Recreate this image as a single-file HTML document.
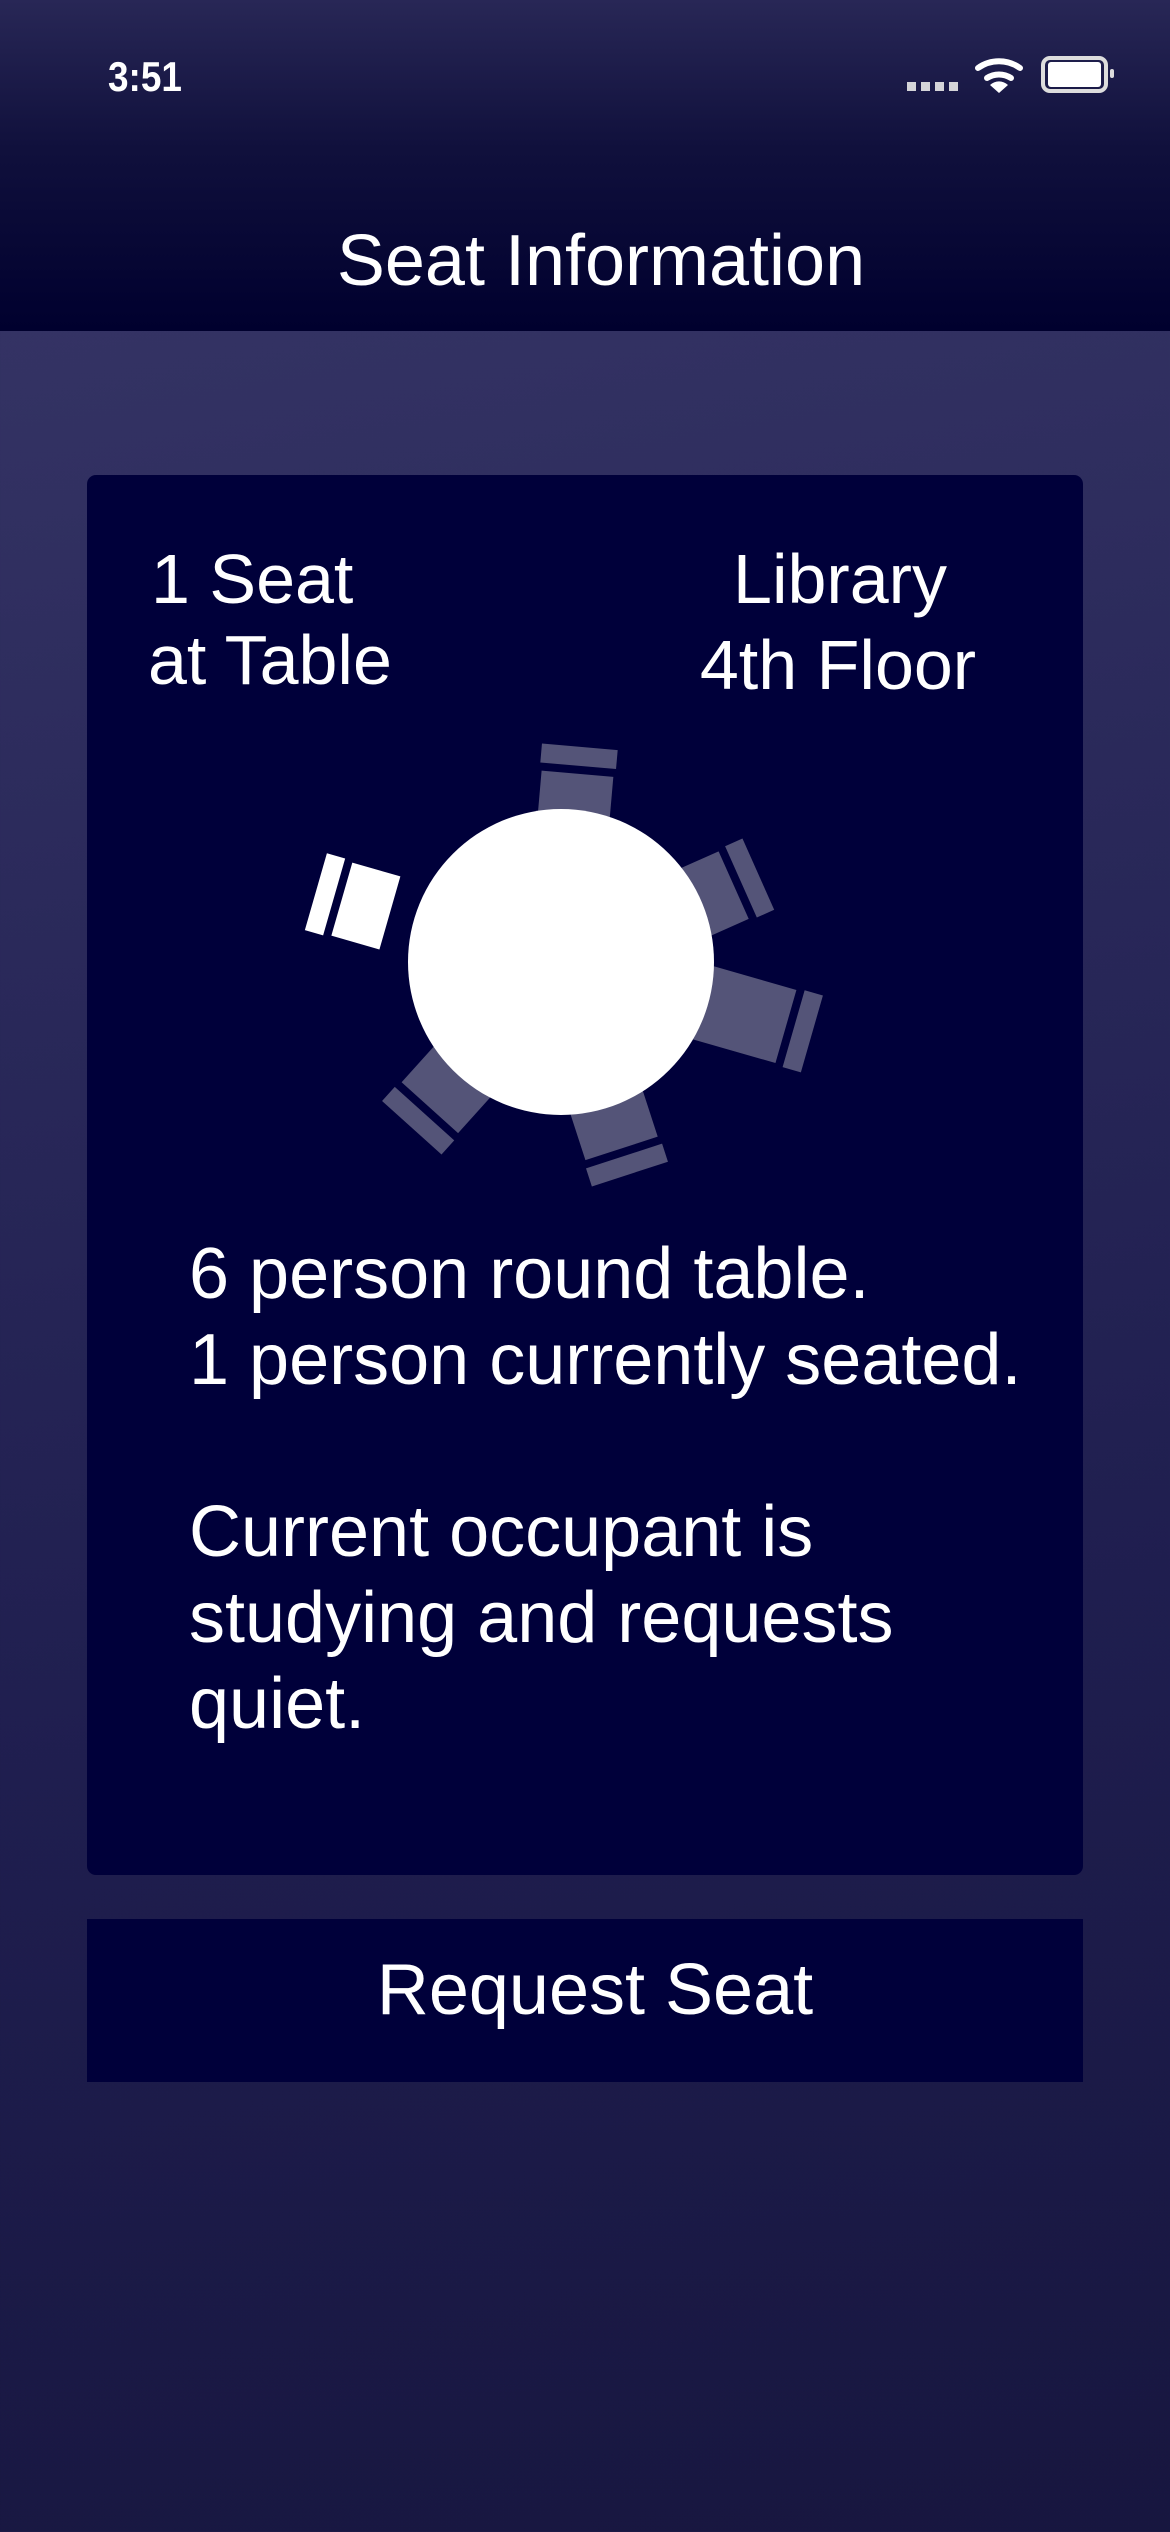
<!DOCTYPE html>
<html><head><meta charset="utf-8"><style>
html,body{margin:0;padding:0}
body{width:1170px;height:2532px;position:relative;overflow:hidden;font-family:"Liberation Sans",sans-serif;color:#fff;
background:linear-gradient(170deg,#393869 0%,#2a295a 35%,#1f1e4f 65%,#17163f 100%)}
.hdr{position:absolute;left:0;top:0;width:1170px;height:331px;background:linear-gradient(180deg,#282756 0%,#10103c 45%,#00002e 100%)}
.t{position:absolute;white-space:nowrap}
.card{position:absolute;left:87px;top:475px;width:996px;height:1400px;background:#00003a;border-radius:9px}
.btn{position:absolute;left:87px;top:1919px;width:996px;height:163px;background:#00003a}
</style></head><body>
<div class="hdr"></div>
<div class="t" style="left:108px;top:56px;font-size:42px;line-height:42px;font-weight:bold;transform:scaleX(0.88);transform-origin:left">3:51</div>
<svg style="position:absolute;left:0;top:0" width="1170" height="120">
 <g fill="#d4d4d8"><rect x="907" y="82" width="9" height="9"/><rect x="921" y="82" width="9" height="9"/><rect x="935" y="82" width="9" height="9"/><rect x="949" y="82" width="9" height="9"/></g>
 <g fill="none" stroke="#fff" stroke-width="6" stroke-linecap="round">
  <path d="M978 68 A36 36 0 0 1 1020 68"/>
  <path d="M987 78 A22 22 0 0 1 1011 78"/>
 </g>
 <path d="M990 85 L999 93 L1008 85 A13 13 0 0 0 990 85Z" fill="#fff"/>
 <rect x="1043" y="58" width="63" height="33" rx="7" fill="none" stroke="#ddd" stroke-width="4"/>
 <rect x="1048" y="62" width="53" height="25" rx="3" fill="#fff"/>
 <rect x="1110" y="69" width="4" height="9" rx="2" fill="#ddd"/>
</svg>
<div class="t" style="left:16px;width:1170px;text-align:center;top:225px;font-size:72px;line-height:72px">Seat Information</div>

<div class="card"></div>
<div class="t" style="left:151px;top:537px;font-size:70px;line-height:84px">1 Seat</div>
<div class="t" style="left:148px;top:618px;font-size:70px;line-height:84px">at Table</div>
<div class="t" style="left:640px;width:400px;text-align:center;top:537px;font-size:70px;line-height:84px">Library</div>
<div class="t" style="left:638px;width:400px;text-align:center;top:623px;font-size:70px;line-height:84px">4th Floor</div>

<svg style="position:absolute;left:0;top:0" width="1170" height="1300">
 <g fill="#545478">
  <g transform="translate(561 962) rotate(5)"><rect x="-36" y="-189" width="72" height="70"/><rect x="-38" y="-216" width="76" height="19"/></g>
  <g transform="translate(561 962) rotate(66)"><rect x="-37" y="-189" width="74" height="70"/><rect x="-39" y="-216" width="78" height="19"/></g>
  <g transform="translate(561 962) rotate(106)"><rect x="-38" y="-234" width="76" height="90"/><rect x="-40" y="-261" width="80" height="19"/></g>
  <g transform="translate(561 962) rotate(162)"><rect x="-38" y="-196" width="76" height="70"/><rect x="-40" y="-223" width="80" height="19"/></g>
  <g transform="translate(561 962) rotate(222)"><rect x="-38" y="-196" width="76" height="70"/><rect x="-40" y="-223" width="80" height="19"/></g>
 </g>
 <g fill="#fff">
  <g transform="translate(561 962) rotate(-74)"><rect x="-38" y="-228" width="76" height="50"/><rect x="-40" y="-255" width="80" height="19"/></g>
 </g>
 <circle cx="561" cy="962" r="153" fill="#fff"/>
</svg>

<div class="t" style="left:189px;top:1231px;font-size:72px;line-height:86px">6 person round table.<br>1 person currently seated.<br><br>Current occupant is<br>studying and requests<br>quiet.</div>

<div class="btn"></div>
<div class="t" style="left:97px;width:996px;text-align:center;top:1954px;font-size:72px;line-height:72px">Request Seat</div>
</body></html>
